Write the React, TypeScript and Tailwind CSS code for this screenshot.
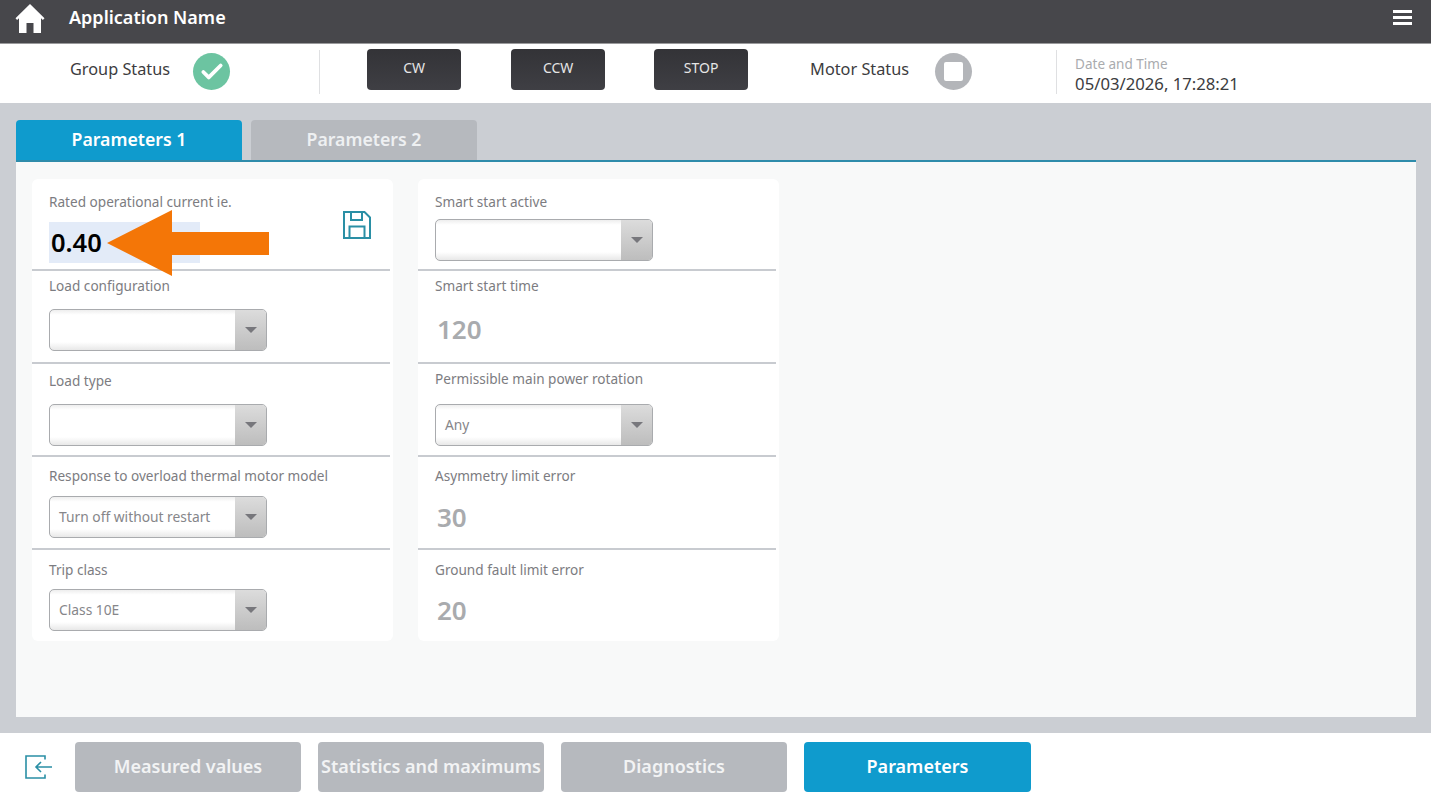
import { Check } from "lucide-react";

const font = "font-['Noto_Sans',sans-serif]";

type Row = {
  label: string;
  pt: string;
  height: string;
  select?: string;
  selectMt?: string;
  value?: string;
  valueMt?: string;
};

const leftRows: Row[] = [
  { label: "Load configuration", pt: "pt-[5px]", height: "h-[93px]", select: "", selectMt: "mt-[13px]" },
  { label: "Load type", pt: "pt-[7px]", height: "h-[93px]", select: "", selectMt: "mt-[13px]" },
  { label: "Response to overload thermal motor model", pt: "pt-[9px]", height: "h-[93px]", select: "Turn off without restart", selectMt: "mt-[10px]" },
  { label: "Trip class", pt: "pt-[10px]", height: "h-[91px]", select: "Class 10E", selectMt: "mt-[9px]" },
];

const rightRows: Row[] = [
  { label: "Smart start active", pt: "pt-[13px]", height: "h-[92px]", select: "", selectMt: "mt-[7px]" },
  { label: "Smart start time", pt: "pt-[5px]", height: "h-[93px]", value: "120", valueMt: "mt-[18px]" },
  { label: "Permissible main power rotation", pt: "pt-[5px]", height: "h-[93px]", select: "Any", selectMt: "mt-[15px]" },
  { label: "Asymmetry limit error", pt: "pt-[9px]", height: "h-[93px]", value: "30", valueMt: "mt-[16px]" },
  { label: "Ground fault limit error", pt: "pt-[10px]", height: "h-[91px]", value: "20", valueMt: "mt-[15px]" },
];

const navButtons = ["Measured values", "Statistics and maximums", "Diagnostics"];

function SelectBox({ text, className }: { text: string; className?: string }) {
  return (
    <div className={`ml-[17px] flex h-[42px] w-[218px] overflow-hidden rounded-[5px] border border-[#a9abae] bg-[linear-gradient(to_bottom,#eeeeee_0%,#ffffff_12%,#ffffff_80%,#e8e8e8_100%)] ${className ?? ""}`}>
      <span className="flex-1 pl-[9px] text-[13.8px] leading-[40px] text-[#86868a]">{text}</span>
      <span className="flex w-[31px] items-center justify-center bg-gradient-to-b from-[#dcdcdc] to-[#bdbdbd]">
        <span className="h-0 w-0 border-x-[6px] border-t-[6px] border-x-transparent border-t-[#77777c]" />
      </span>
    </div>
  );
}

function FieldRow({ row, last }: { row: Row; last: boolean }) {
  return (
    <div className={`${row.height} ${row.pt} ${last ? "" : "mr-[3px] border-b-2 border-[#c8cbd0]"}`}>
      <p className="pl-[17px] text-[13.6px] leading-[20px] text-[#7c7c81]">{row.label}</p>
      {row.select !== undefined && <SelectBox text={row.select} className={row.selectMt} />}
      {row.value !== undefined && (
        <p className={`${row.valueMt} pl-[19px] text-[26px] font-semibold leading-[30px] text-[#a9abae]`}>{row.value}</p>
      )}
    </div>
  );
}

function CommandButton({ label, className }: { label: string; className?: string }) {
  return (
    <button
      type="button"
      className={`mb-[9px] h-[41px] w-[94px] rounded-[4px] bg-gradient-to-b from-[#333337] to-[#3f3f44] pb-[3px] text-[14px] text-[#e6e6e6] ${className ?? ""}`}
    >
      {label}
    </button>
  );
}

export default function App() {
  return (
    <div className={`flex h-[799px] w-[1431px] flex-col overflow-hidden bg-white ${font}`}>
      <header className="flex h-[44px] shrink-0 items-center border-b border-[#9a9a9c] bg-[#47474b] pb-[8px] pl-[14px] pr-[19px]">
        <svg viewBox="0 0 32 32" className="h-[32px] w-[32px]" fill="white">
          <path d="M16 2 1.5 16.2l1.6 1.7L5 16.2V31h7.5v-10h7v10H27V16.2l1.9 1.7 1.6-1.7z" />
        </svg>
        <h1 className="ml-[23px] flex-1 text-[18px] font-semibold text-white">Application Name</h1>
        <div className="flex w-[19px] flex-col gap-[3px]">
          <span className="h-[3px] bg-white" />
          <span className="h-[3px] bg-white" />
          <span className="h-[3px] bg-white" />
        </div>
      </header>

      <section className="flex h-[59px] shrink-0 items-center">
        <span className="mb-[8px] ml-[70px] text-[16.3px] text-[#3c3c40]">Group Status</span>
        <span className="mb-[4px] ml-[23px] flex h-[37px] w-[37px] items-center justify-center rounded-full bg-[#6cc4a1]">
          <Check className="h-[26px] w-[26px] text-white" strokeWidth={3.5} />
        </span>
        <span className="mb-[3px] ml-[89px] h-[44px] w-px bg-[#dfe0e2]" />
        <CommandButton label="CW" className="ml-[47px]" />
        <CommandButton label="CCW" className="ml-[50px]" />
        <CommandButton label="STOP" className="ml-[49px]" />
        <span className="mb-[8px] ml-[62px] text-[16.3px] text-[#3c3c40]">Motor Status</span>
        <span className="mb-[4px] ml-[26px] flex h-[37px] w-[37px] items-center justify-center rounded-full bg-[#b3b5b9]">
          <span className="h-[19px] w-[19px] rounded-[2px] bg-white" />
        </span>
        <span className="mb-[3px] ml-[84px] h-[44px] w-px bg-[#dfe0e2]" />
        <div className="ml-[18px]">
          <p className="text-[13.5px] leading-[20px] text-[#a9abae]">Date and Time</p>
          <p className="text-[16.7px] leading-[20px] text-[#3c3c40]">05/03/2026, 17:28:21</p>
        </div>
      </section>

      <main className="flex h-[630px] shrink-0 flex-col bg-[#cbced3] px-[15px] pb-[16px] pt-[17px]">
        <div className="flex h-[40px] shrink-0 items-stretch gap-[9px] pl-px">
          <div className="flex w-[226px] items-center justify-center rounded-t-[4px] bg-[#0f9bcd] pb-px text-[17.7px] font-semibold text-white">
            Parameters 1
          </div>
          <div className="flex w-[226px] items-center justify-center rounded-t-[4px] bg-[#b6b9be] pb-px text-[17.7px] font-semibold text-[#eef0f2]">
            Parameters 2
          </div>
        </div>
        <div className="ml-px flex flex-1 items-start gap-[25px] border-t-2 border-[#2e8cab] bg-[#f8f9f9] pl-[16px] pt-[17px]">
          <div className="relative w-[361px] rounded-[6px] bg-white">
            <div className="mr-[3px] h-[92px] border-b-2 border-[#c8cbd0] pt-[13px]">
              <p className="pl-[17px] text-[13.6px] leading-[20px] text-[#7c7c81]">Rated operational current ie.</p>
              <div className="ml-[17px] mt-[10px] h-[41px] w-[151px] bg-[#e3ebf8] pl-[2px] text-[25.5px] font-semibold leading-[41px] text-black">
                0.40
              </div>
            </div>
            <svg viewBox="0 0 28 28" className="absolute left-[311px] top-[32px] h-[28px] w-[28px]" fill="none" stroke="#2a8fa5" strokeWidth="2">
              <path d="M1 1h20.5L27 6.5V27H1z" />
              <path d="M8 1v8h11V1" />
              <path d="M6.5 27V15.5h15V27" />
            </svg>
            <svg viewBox="0 0 164 68" className="absolute left-[73px] top-[30px] h-[68px] w-[164px]" fill="#f47607">
              <path d="M2 34 67 1v22h97v23H67v21z" />
            </svg>
            {leftRows.map((row, i) => (
              <FieldRow key={row.label} row={row} last={i === leftRows.length - 1} />
            ))}
          </div>
          <div className="w-[361px] rounded-[6px] bg-white">
            {rightRows.map((row, i) => (
              <FieldRow key={row.label} row={row} last={i === rightRows.length - 1} />
            ))}
          </div>
        </div>
      </main>

      <footer className="flex flex-1 items-start gap-[17px] pl-[25px] pt-[9px]">
        <svg viewBox="0 0 28 26" className="mr-[5px] mt-[13px] h-[26px] w-[28px]" fill="none" stroke="#2a8fa5" strokeWidth="1.6">
          <path d="M20 4.5V1H1v22h19v-3.5" />
          <path d="M27 12H11M16 7l-5 5 5 5" />
        </svg>
        {navButtons.map((label) => (
          <button
            key={label}
            type="button"
            className="h-[50px] w-[226px] whitespace-nowrap rounded-[4px] bg-[#b6b9be] pb-[2px] text-[18px] font-semibold text-[#f2f3f4]"
          >
            {label}
          </button>
        ))}
        <button type="button" className="h-[50px] w-[227px] rounded-[4px] bg-[#0f9bcd] pb-[2px] text-[18px] font-semibold text-white">
          Parameters
        </button>
      </footer>
    </div>
  );
}
